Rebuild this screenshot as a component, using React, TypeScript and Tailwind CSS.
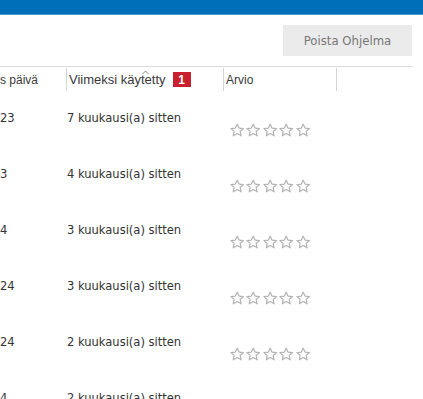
import React from "react";

const rows = [
  { date: "23", used: "7 kuukausi(a) sitten" },
  { date: "3", used: "4 kuukausi(a) sitten" },
  { date: "4", used: "3 kuukausi(a) sitten" },
  { date: "24", used: "3 kuukausi(a) sitten" },
  { date: "24", used: "2 kuukausi(a) sitten" },
  { date: "4", used: "2 kuukausi(a) sitten" },
];

function Star() {
  return (
    <svg width="16.4" height="14" viewBox="0 0 16 14">
      <path
        d="M8 1.2 L9.9 5.1 L14.3 5.6 L11 8.5 L11.9 12.8 L8 10.6 L4.1 12.8 L5 8.5 L1.7 5.6 L6.1 5.1 Z"
        fill="#fff"
        stroke="#b4b4b4"
        strokeWidth="1.2"
        strokeLinejoin="round"
      />
    </svg>
  );
}

function Rating() {
  return (
    <div className="flex">
      {[0, 1, 2, 3, 4].map((i) => (
        <Star key={i} />
      ))}
    </div>
  );
}

export default function App() {
  return (
    <div
      className="h-[399px] w-[423px] overflow-hidden bg-white text-[#333]"
      style={{ fontFamily: '"DejaVu Sans Condensed", "DejaVu Sans", sans-serif' }}
    >
      <div className="h-[15px] border-b border-[#4b97d2] bg-[#006fba]" />

      <div className="flex justify-end pt-[10px] pr-[11px]">
        <button className="h-[31px] w-[129px] bg-[#ebebeb] text-[13px] text-[#777]">
          Poista Ohjelma
        </button>
      </div>

      <div className="mt-[10px] w-[413px] border-t border-[#dcdcdc]">
        <div className="grid h-[24px] grid-cols-[66px_157px_113px_77px] pt-[1px] font-['Liberation_Sans',sans-serif] text-[12px] text-[#3a3a3a]">
          <div className="flex items-center">s päivä</div>
          <div className="relative flex items-center gap-[7px] border-l border-[#d4d4d4] pl-[2px]">
            <span className="text-[13px]">Viimeksi käytetty</span>
            <svg
              className="absolute top-[2px] left-[75px]"
              width="7"
              height="5"
              viewBox="0 0 7 5"
            >
              <path d="M0.5 4 L3.5 1 L6.5 4" fill="none" stroke="#8a8a8a" strokeWidth="1" />
            </svg>
            <span className="flex h-[15px] w-[18px] items-center justify-center bg-[#c8202f] text-[12px] font-bold text-white">
              1
            </span>
          </div>
          <div className="flex items-center border-l border-[#d4d4d4] pl-[2px]">Arvio</div>
          <div className="border-l border-[#d4d4d4]" />
        </div>
      </div>

      <div className="w-[413px]">
        {rows.map((row, i) => (
          <div
            key={i}
            className="grid h-[56px] grid-cols-[67px_156px_190px] text-[12.8px] leading-[16px]"
          >
            <div className="pt-[19px]">{row.date}</div>
            <div className="pt-[19px]">{row.used}</div>
            <div className="pt-[32px] pl-[6px]">
              <Rating />
            </div>
          </div>
        ))}
      </div>
    </div>
  );
}
